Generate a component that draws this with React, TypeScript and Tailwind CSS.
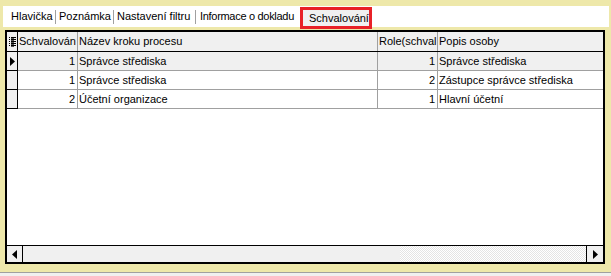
const rows = [
  { order: 1, step: 'Správce střediska', role: 1, person: 'Správce střediska' },
  { order: 1, step: 'Správce střediska', role: 2, person: 'Zástupce správce střediska' },
  { order: 2, step: 'Účetní organizace', role: 1, person: 'Hlavní účetní' },
];

const ColumnsIcon = () => (
  <svg width="7" height="10" viewBox="0 0 7 10" className="block">
    {[0, 2, 4, 6, 8].map((y) => (
      <g key={y}>
        <rect x="0" y={y} width="1" height="1" fill="#000" />
        <rect x="2" y={y} width="5" height="1" fill="#000" />
      </g>
    ))}
    {[1, 3, 5, 7, 9].map((y) => (
      <rect key={y} x="2" y={y} width="3" height="1" fill="#555" />
    ))}
  </svg>
);

const Arrow = ({ dir }: { dir: 'left' | 'right' }) => (
  <svg width="5" height="9" viewBox="0 0 5 9" className="block">
    <polygon points={dir === 'right' ? '0,0 5,4.5 0,9' : '5,0 0,4.5 5,9'} fill="#000" />
  </svg>
);

const Tab = ({ label, className }: { label: string; className: string }) => (
  <div className={`flex items-center h-full whitespace-nowrap ${className}`}>{label}</div>
);

const Separator = () => <div className="w-px h-[14px] self-center bg-[#a0a0a0]" />;

export default function App() {
  return (
    <div className="w-[611px] h-[276px] bg-[#eee8aa] flex flex-col overflow-hidden font-['Liberation_Sans',Arial,sans-serif] text-[11px] text-black">
      <div className="h-[6px] shrink-0" />

      {/* tabs */}
      <div className="ml-[3px] w-[606px] h-[21px] shrink-0 bg-white flex items-start">
        <Tab label="Hlavička" className="w-[52px] pl-[8px]" />
        <Separator />
        <Tab label="Poznámka" className="w-[57px] pl-[3px]" />
        <Separator />
        <Tab label="Nastavení filtru" className="w-[81px] pl-[3px]" />
        <Separator />
        <Tab label="Informace o dokladu" className="w-[104px] pl-[4px] tracking-[-0.3px]" />
        <div className="mt-px w-[72px] h-[22px] border-[3px] border-[#e82127] bg-[#f0f0f0] flex items-center pl-[6px] whitespace-nowrap relative z-10">
          Schvalování
        </div>
      </div>

      <div className="h-[3px] shrink-0" />

      {/* grid */}
      <div className="ml-[5px] w-[600px] h-[234px] shrink-0 border-2 border-black bg-white flex flex-col overflow-hidden">
        <div className="flex h-[20px] shrink-0 bg-[#f0f0f0] border-b border-black">
          <div className="w-[11px] shrink-0 border-r border-black flex items-center justify-center">
            <ColumnsIcon />
          </div>
          <div className="w-[60px] shrink-0 border-r border-[#a0a0a0] pl-[1px] flex items-center whitespace-nowrap overflow-hidden">
            Schvalován
          </div>
          <div className="w-[300px] shrink-0 border-r border-[#a0a0a0] pl-[1px] flex items-center whitespace-nowrap">
            Název kroku procesu
          </div>
          <div className="w-[60px] shrink-0 border-r border-[#a0a0a0] pl-[1px] flex items-center whitespace-nowrap overflow-hidden">
            Role(schval
          </div>
          <div className="flex-1 pl-[1px] flex items-center whitespace-nowrap">Popis osoby</div>
        </div>

        {rows.map((row, i) => (
          <div key={i} className={`flex h-[19px] shrink-0 ${i === 0 ? 'bg-[#f0f0f0]' : 'bg-white'}`}>
            <div className="w-[11px] shrink-0 bg-[#f0f0f0] border-r border-b border-black flex items-center justify-center">
              {i === 0 && <Arrow dir="right" />}
            </div>
            <div className="w-[60px] shrink-0 border-r border-b border-[#a0a0a0] pr-[2px] flex items-center justify-end">
              {row.order}
            </div>
            <div className="w-[300px] shrink-0 border-r border-b border-[#a0a0a0] pl-[1px] flex items-center whitespace-nowrap">
              {row.step}
            </div>
            <div className="w-[60px] shrink-0 border-r border-b border-[#a0a0a0] pr-[2px] flex items-center justify-end">
              {row.role}
            </div>
            <div className="flex-1 border-b border-[#a0a0a0] pl-[1px] flex items-center whitespace-nowrap">
              {row.person}
            </div>
          </div>
        ))}

        <div className="flex-1" />

        {/* horizontal scrollbar */}
        <div className="flex h-[17px] shrink-0 border-t border-black">
          <div className="w-[16px] shrink-0 border-r border-black bg-[#f0f0f0] flex items-center justify-center">
            <Arrow dir="left" />
          </div>
          <div className="w-[377px] shrink-0 bg-[#f0f0f0]" />
          <div className="flex-1 bg-[conic-gradient(#ffffff_25%,#e4e4e4_0_50%,#ffffff_0_75%,#e4e4e4_0)] bg-[length:2px_2px]" />
          <div className="w-[17px] shrink-0 border-l border-black bg-[#f0f0f0] flex items-center justify-center">
            <Arrow dir="right" />
          </div>
        </div>
      </div>

      <div className="h-[8px] shrink-0" />
      <div className="h-px shrink-0 bg-[#a0a0a0]" />
      <div className="flex-1 bg-[#f0f0f0]" />
    </div>
  );
}
